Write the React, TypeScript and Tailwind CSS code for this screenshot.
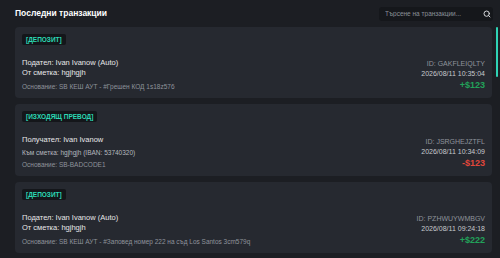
import { Search } from "lucide-react";

type Tx = {
  kind: "in" | "out";
  party: string;
  account: string;
  reason: string;
  id: string;
  date: string;
  amount: number;
};

const txs: Tx[] = [
  { kind: "in", party: "Ivan Ivanow (Auto)", account: "hgjhgjh", reason: "SB КЕШ АУТ - #Грешен КОД 1s18z576", id: "GAKFLEIQLTY", date: "2026/08/11 10:35:04", amount: 123 },
  { kind: "out", party: "Ivan Ivanow", account: "hgjhgjh (IBAN: 53740320)", reason: "SB-BADCODE1", id: "JSRGHEJZTFL", date: "2026/08/11 10:34:09", amount: -123 },
  { kind: "in", party: "Ivan Ivanow (Auto)", account: "hgjhgjh", reason: "SB КЕШ АУТ - #Заповед номер 222 на съд Los Santos 3cm579q", id: "PZHWUYWMBGV", date: "2026/08/11 09:24:18", amount: 222 },
];

function TxCard({ tx }: { tx: Tx }) {
  const isIn = tx.kind === "in";
  return (
    <div className="shrink-0 rounded-[4px] bg-[#262930] px-[7px] pt-[7px] pb-[7px]">
      <div className="flex">
        <span className="flex h-[11px] items-center rounded-[2px] bg-[#14161a] px-[4px] text-[6.5px] font-bold text-[#2bd9b5]">
          {isIn ? "[ДЕПОЗИТ]" : "[ИЗХОДЯЩ ПРЕВОД]"}
        </span>
      </div>
      <div className="mt-[13px] flex items-end justify-between">
        {isIn ? (
          <div>
            <div className="text-[7.5px] leading-[10px] text-[#e6e7e9]">Подател: {tx.party}</div>
            <div className="text-[7.5px] leading-[10px] text-[#e6e7e9]">От сметка: {tx.account}</div>
            <div className="mt-[4px] text-[6.5px] leading-[9px] text-[#8e939b]">Основание: {tx.reason}</div>
          </div>
        ) : (
          <div>
            <div className="text-[7.5px] leading-[10px] text-[#e6e7e9]">Получател: {tx.party}</div>
            <div className="mt-[3px] text-[6.5px] leading-[9px] text-[#b4b8bf]">Към сметка: {tx.account}</div>
            <div className="mt-[3px] text-[6.5px] leading-[9px] text-[#8e939b]">Основание: {tx.reason}</div>
          </div>
        )}
        <div className="text-right">
          <div className="text-[7px] leading-[10px] text-[#8e939b]">ID: {tx.id}</div>
          <div className="text-[7px] leading-[10px] text-[#c6c9ce]">{tx.date}</div>
          <div className={`mt-[1px] text-[9px] font-bold leading-[11px] ${isIn ? "text-[#22a25a]" : "text-[#e0463b]"}`}>
            {isIn ? `+$${tx.amount}` : `-$${Math.abs(tx.amount)}`}
          </div>
        </div>
      </div>
    </div>
  );
}

export default function App() {
  return (
    <div className="flex h-[258px] w-[500px] flex-col overflow-hidden bg-[#1c1e23] font-['Liberation_Sans',Arial,sans-serif]">
      <div className="flex h-[27px] shrink-0 items-center justify-between pl-[15px] pr-[7px]">
        <h2 className="text-[8.5px] font-bold text-white">Последни транзакции</h2>
        <div className="flex h-[14px] w-[114px] items-center rounded-[3px] bg-[#15171b] pl-[6px] pr-[2px]">
          <input
            className="min-w-0 flex-1 bg-transparent text-[6.5px] text-white outline-none placeholder:text-[#8b9099]"
            placeholder="Търсене на транзакции..."
          />
          <Search size={8} strokeWidth={3} className="text-[#d4d6da]" />
        </div>
      </div>
      <div className="relative min-h-0 flex-1">
        <div className="flex h-full flex-col gap-[6px] overflow-hidden pl-[15px] pr-[8px]">
          {txs.map((tx) => (
            <TxCard key={tx.id} tx={tx} />
          ))}
        </div>
        {/* scrollbar thumb */}
        <div className="absolute top-0 right-[2px] h-[50px] w-[2px] rounded-full bg-[#2fd3b5]" />
      </div>
    </div>
  );
}
